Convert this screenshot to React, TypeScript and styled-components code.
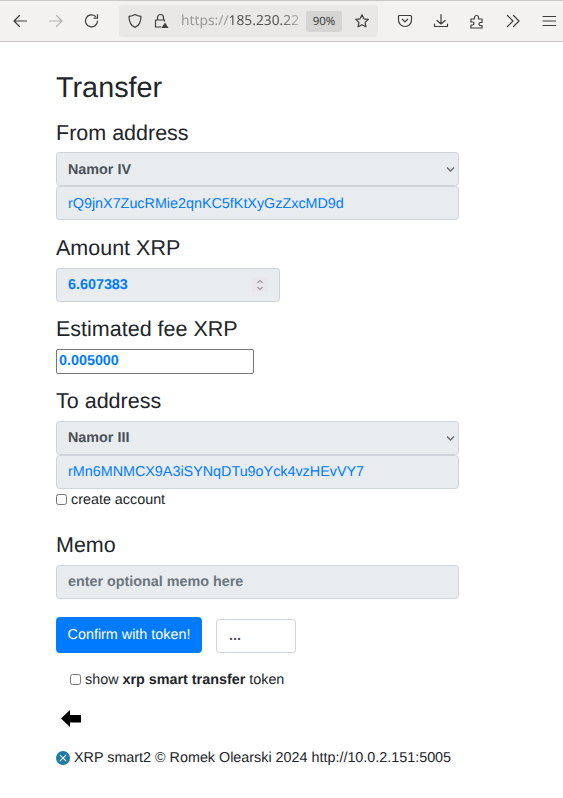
import React from "react";
import styled, { createGlobalStyle } from "styled-components";

const GlobalStyle = createGlobalStyle`
  * { box-sizing: border-box; }
  html, body { margin: 0; padding: 0; background: #fff; }
  body {
    font-family: "Liberation Sans", Arial, sans-serif;
    font-size: 14.35px;
    line-height: 1.5;
    color: #212529;
    text-rendering: geometricPrecision;
  }
  input, select, button { text-rendering: geometricPrecision; }
`;

const Toolbar = styled.div`
  display: flex;
  align-items: center;
  height: 42px;
  background: #f3f2f0;
  border-top: 1px solid #c9c8c6;
  border-bottom: 1px solid #c9c8c6;
  color: #3d3d3d;
`;

const ToolButton = styled.div<{ $width: number; $faded?: boolean }>`
  display: flex;
  align-items: center;
  justify-content: center;
  width: ${(p) => p.$width}px;
  flex: none;
  color: ${(p) => (p.$faded ? "#b4b3b1" : "#3d3d3d")};
`;

const UrlBar = styled.div`
  display: flex;
  align-items: center;
  width: 259px;
  height: 32px;
  margin: 0 9px 0 7px;
  padding: 0 8px;
  background: #e9e8e6;
  border-radius: 4px;
  flex: none;
`;

const UrlIcon = styled.div`
  display: flex;
  width: 16px;
  margin-right: 10px;
  flex: none;
`;

const UrlText = styled.div`
  flex: 1;
  min-width: 0;
  margin-left: 2px;
  overflow: hidden;
  white-space: nowrap;
  font-family: "Noto Sans", "Open Sans", sans-serif;
  font-size: 13.8px;
  color: #9a9a98;
  mask-image: linear-gradient(to right, #000 85%, rgba(0, 0, 0, 0.35) 100%);
`;

const UrlHost = styled.span`
  color: #555553;
`;

const Zoom = styled.div`
  width: 36px;
  height: 21px;
  margin: 0 12px 0 8px;
  background: #d6d5d3;
  border-radius: 3px;
  font-family: "Noto Sans", "Open Sans", sans-serif;
  font-size: 11.5px;
  line-height: 21px;
  text-align: center;
  color: #3d3d3d;
  flex: none;
`;

const Page = styled.div`
  padding: 29px 0 0 56px;
  width: 459px;
`;

const Title = styled.h2`
  margin: 0 0 14px;
  font-size: 28.8px;
  font-weight: 400;
  line-height: 1.2;
`;

const Heading = styled.h4<{ $top?: number; $bottom?: number }>`
  margin: ${(p) => p.$top ?? 0}px 0 ${(p) => p.$bottom ?? 7}px;
  font-size: 21.5px;
  font-weight: 400;
  line-height: 26px;
`;

const SelectWrap = styled.div`
  position: relative;
`;

const Select = styled.select<{ $nudge?: boolean }>`
  display: block;
  width: 100%;
  height: 34px;
  padding: ${(p) => (p.$nudge ? "2px" : "0")} 11px 0;
  appearance: none;
  background: #e9ecef;
  border: 1px solid #ced4da;
  border-radius: 3.6px;
  font: bold 14.35px "Liberation Sans", Arial, sans-serif;
  color: #495057;
  opacity: 1;
`;

const Chevron = styled.svg`
  position: absolute;
  right: 4px;
  top: 14px;
  width: 9px;
  height: 7px;
  fill: none;
  stroke: #666;
  stroke-width: 1.3;
`;

const Field = styled.input<{ $bold?: boolean; $nudge?: boolean }>`
  display: block;
  width: 100%;
  height: 34px;
  padding: ${(p) => (p.$nudge ? "2px" : "0")} 11px 0;
  background: #e9ecef;
  border: 1px solid #ced4da;
  border-radius: 3.6px;
  font: ${(p) => (p.$bold ? "bold" : "normal")} 14.35px "Liberation Sans", Arial, sans-serif;
  color: #007bff;
  opacity: 1;
  -webkit-text-fill-color: #007bff;

  &::placeholder {
    color: #6c757d;
    -webkit-text-fill-color: #6c757d;
    opacity: 1;
  }
`;

const AmountWrap = styled.div`
  position: relative;
  width: 224px;
`;

const Spinner = styled.svg`
  position: absolute;
  right: 12px;
  top: 10px;
  width: 16px;
  height: 14px;
  background: #e7e7eb;
  fill: none;
  stroke: #666;
  stroke-width: 1;
`;

const FeeInput = styled.input`
  display: block;
  width: 198px;
  height: 25px;
  padding: 0 2px;
  background: #fff;
  border: 1px solid #767676;
  border-radius: 2px;
  font: bold 14.35px "Liberation Sans", Arial, sans-serif;
  color: #007bff;
`;

const CheckRow = styled.label<{ $indent?: number; $top?: number }>`
  display: flex;
  align-items: center;
  gap: 4px;
  margin: ${(p) => p.$top ?? 0}px 0 0 ${(p) => p.$indent ?? 0}px;
  height: 22px;
  padding-top: 2px;
  font-size: 14.35px;
`;

const Check = styled.input`
  width: 11px;
  height: 11px;
  margin: 0 0 2px;
`;

const Actions = styled.div`
  display: flex;
  align-items: flex-end;
  gap: 14px;
  margin-top: 18px;
`;

const ConfirmButton = styled.button`
  width: 146px;
  height: 36px;
  padding: 0;
  background: #007bff;
  border: 1px solid #007bff;
  border-radius: 3.6px;
  color: #fff;
  font: 14.35px "Liberation Sans", Arial, sans-serif;
`;

const TokenInput = styled.input`
  width: 80px;
  height: 34px;
  padding: 0 12px;
  background: #fff;
  border: 1px solid #ced4da;
  border-radius: 3.6px;
  font: bold 14.35px "Liberation Sans", Arial, sans-serif;
  color: #495057;

  &::placeholder {
    color: #495057;
    opacity: 1;
  }
`;

const BackArrow = styled.svg`
  display: block;
  width: 20px;
  height: 17px;
  margin: 19px 0 0 5px;
  fill: #000;
`;

const Footer = styled.div`
  display: flex;
  align-items: center;
  gap: 4px;
  margin-top: 21px;
  width: 420px;
  white-space: nowrap;
  font-size: 14.35px;
`;

const Line = (props: React.SVGProps<SVGSVGElement>) => (
  <svg
    width="16"
    height="16"
    viewBox="0 0 16 16"
    fill="none"
    stroke="currentColor"
    strokeWidth="1.2"
    strokeLinecap="round"
    strokeLinejoin="round"
    {...props}
  />
);

const App = () => {
  return (
    <>
      <GlobalStyle />
      <Toolbar>
        <ToolButton $width={40}>
          <Line><path d="M14.5 8H2M7.5 2.500 2 8l5.500 5.500" /></Line>
        </ToolButton>
        <ToolButton $width={32} $faded>
          <Line><path d="M1.500 8H14M8.500 2.500 14 8l-5.500 5.500" /></Line>
        </ToolButton>
        <ToolButton $width={40}>
          <Line><path d="M13.500 8A6 6 0 1 1 11.500 3.400M13.500 1.500v3.600H10" /></Line>
        </ToolButton>
        <UrlBar>
          <UrlIcon>
            <Line><path d="M8 1.600c2 1.200 3.800 1.600 6 1.700 0 5.400-1.500 9.300-6 11.100C3.500 12.600 2 8.700 2 3.300c2.200-.1 4-.5 6-1.700Z" /></Line>
          </UrlIcon>
          <UrlIcon>
            <Line>
              <path d="M4.500 7V4.500a3 3 0 0 1 6 0V7M8 14H2.500V7h9v1" />
              <path d="M12 9.500 15.500 15h-7Z" fill="currentColor" stroke="none" />
            </Line>
          </UrlIcon>
          <UrlText>
            https://<UrlHost>185.230.22</UrlHost>
          </UrlText>
          <Zoom>90%</Zoom>
          <Line><path d="m8 1.800 1.900 4 4.400.6-3.200 3 .8 4.400L8 11.700l-3.900 2.100.8-4.400-3.200-3 4.400-.6Z" /></Line>
        </UrlBar>
        <ToolButton $width={36}>
          <Line><path d="M2.500 2.500h11a1 1 0 0 1 1 1V7a6.500 6.500 0 0 1-13 0V3.500a1 1 0 0 1 1-1Z" /><path d="m5.300 6.300 2.700 2.600 2.700-2.600" /></Line>
        </ToolButton>
        <ToolButton $width={36}>
          <Line><path d="M8 1.500v9.500M4 7.500 8 11l4-3.500M1.500 11v2.500h13V11" /></Line>
        </ToolButton>
        <ToolButton $width={36}>
          <Line><path d="M2 6h3.500V4.500a2 2 0 0 1 4 0V6H13v3.500h-1.500a1.500 1.500 0 0 0 0 3H13V15H2v-3h1.500a1 1 0 0 0 0-3H2Z" /></Line>
        </ToolButton>
        <ToolButton $width={36}>
          <Line><path d="m2.500 2.500 5.500 5.500-5.500 5.500M8.500 2.500 14 8l-5.500 5.500" /></Line>
        </ToolButton>
        <ToolButton $width={36}>
          <Line><path d="M2 3.500h12.500M2 8h12.500M2 12.500h12.500" /></Line>
        </ToolButton>
      </Toolbar>

      <Page>
        <Title>Transfer</Title>
        <Heading $bottom={6}>From address</Heading>
        <SelectWrap>
          <Select $nudge disabled defaultValue="iv">
            <option value="iv">Namor IV</option>
          </Select>
          <Chevron viewBox="0 0 9 7"><path d="M1 1.500 4.500 5 8 1.500" /></Chevron>
        </SelectWrap>
        <Field $nudge disabled defaultValue="rQ9jnX7ZucRMie2qnKC5fKtXyGzZxcMD9d" />

        <Heading $top={15}>Amount XRP</Heading>
        <AmountWrap>
          <Field $bold disabled defaultValue="6.607383" />
          <Spinner viewBox="0 0 16 14"><path d="M5.500 5 8 2.500 10.500 5M5.500 9 8 11.500 10.500 9" /></Spinner>
        </AmountWrap>

        <Heading $top={14}>Estimated fee XRP</Heading>
        <FeeInput defaultValue="0.005000" />

        <Heading $top={14}>To address</Heading>
        <SelectWrap>
          <Select disabled defaultValue="iii">
            <option value="iii">Namor III</option>
          </Select>
          <Chevron viewBox="0 0 9 7"><path d="M1 1.500 4.500 5 8 1.500" /></Chevron>
        </SelectWrap>
        <Field disabled defaultValue="rMn6MNMCX9A3iSYNqDTu9oYck4vzHEvVY7" />
        <CheckRow>
          <Check type="checkbox" />
          create account
        </CheckRow>

        <Heading $top={21} $bottom={7}>Memo</Heading>
        <Field $bold disabled placeholder="enter optional memo here" />

        <Actions>
          <ConfirmButton>Confirm with token!</ConfirmButton>
          <TokenInput placeholder="..." />
        </Actions>

        <CheckRow $indent={14} $top={16}>
          <Check type="checkbox" />
          <span>show <b>xrp smart transfer</b> token</span>
        </CheckRow>

        <BackArrow viewBox="0 0 20 17">
          <path d="M0 8.500 9 0v5h11v7.500H9V17Z" />
        </BackArrow>

        <Footer>
          <svg width="14" height="14" viewBox="0 0 14 14">
            <circle cx="7" cy="7" r="7" fill="#1b7ba6" />
            <path d="M3.800 3.800 10.200 10.200M10.200 3.800 3.800 10.200" stroke="#fff" strokeWidth="1.100" />
          </svg>
          XRP smart2 © Romek Olearski 2024 http://10.0.2.151:5005
        </Footer>
      </Page>
    </>
  );
};

export default App;
